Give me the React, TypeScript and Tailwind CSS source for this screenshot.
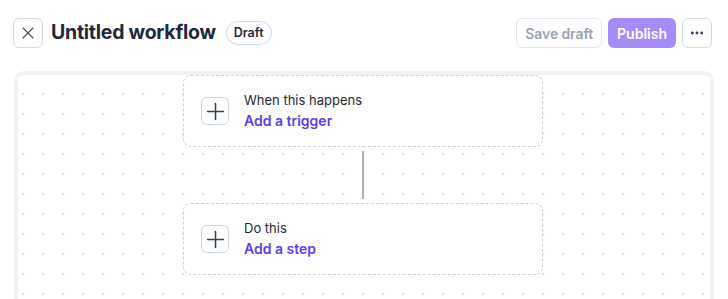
import { X, Plus, MoreHorizontal } from 'lucide-react'

const font = { fontFamily: 'Inter, "Noto Sans", sans-serif' }

export default function App() {
  return (
    <div className="h-screen overflow-hidden bg-white" style={font}>
      {/* Header */}
      <header className="flex items-center justify-between pl-[13px] pr-[16px] pt-[18px]">
        <div className="flex items-center">
          <button className="flex h-[30px] w-[30px] items-center justify-center rounded-md border border-[#d5dce6] text-[#475569]">
            <X className="h-[20px] w-[20px]" strokeWidth={1.4} />
          </button>
          <h1 className="ml-[8px] text-[19.5px] font-bold tracking-[-0.25px] text-[#1e293b]">Untitled workflow</h1>
          <span className="ml-[10px] flex h-[24px] items-center rounded-full border border-[#cfd6e1] px-[7px] text-[12.5px] font-semibold text-[#1e293b]">
            Draft
          </span>
        </div>
        <div className="flex items-center gap-[6px]">
          <button className="h-[30px] rounded-md border border-[#e2e8f0] px-[8px] text-[14px] font-semibold tracking-[-0.1px] text-[#9ca3af]">
            Save draft
          </button>
          <button className="h-[30px] rounded-md bg-[#a78bfa] px-[9px] text-[14px] font-semibold text-white">
            Publish
          </button>
          <button className="flex h-[30px] w-[30px] items-center justify-center rounded-md border border-[#d5dce6] text-[#334155]">
            <MoreHorizontal className="h-[16px] w-[16px]" strokeWidth={2.2} />
          </button>
        </div>
      </header>

      {/* Canvas */}
      <div className="mx-[14px] mt-[23px] h-[280px] rounded-t-[10px] border-[4px] border-[#eff2f7] bg-white bg-[radial-gradient(circle,#dcdfe4_1px,transparent_1.6px)] bg-[length:20px_20px] bg-[position:-5px_9px]">
        <div className="flex flex-col items-center pr-[2px]">
          <StepCard label="When this happens" action="Add a trigger" />
          <div className="my-[4px] h-[48px] w-[2px] bg-[#a9aeb8]" />
          <StepCard label="Do this" action="Add a step" />
        </div>
      </div>
    </div>
  )
}

interface StepCardProps {
  label: string
  action: string
}

function StepCard({ label, action }: StepCardProps) {
  return (
    <div className="flex h-[72px] w-[360px] items-center gap-[15px] rounded-lg border border-dashed border-[#c9d2df] bg-white px-[17px]">
      <div className="flex h-[28px] w-[28px] items-center justify-center rounded-md border border-[#cdd5e0] text-[#374151]">
        <Plus className="h-[27px] w-[27px] shrink-0" strokeWidth={1.4} />
      </div>
      <div className="flex flex-col">
        <p className="text-[13px] leading-[18px] text-[#1f2937]">{label}</p>
        <p className="mt-[2px] text-[14px] font-semibold leading-[20px] text-[#5b3df6]">{action}</p>
      </div>
    </div>
  )
}
